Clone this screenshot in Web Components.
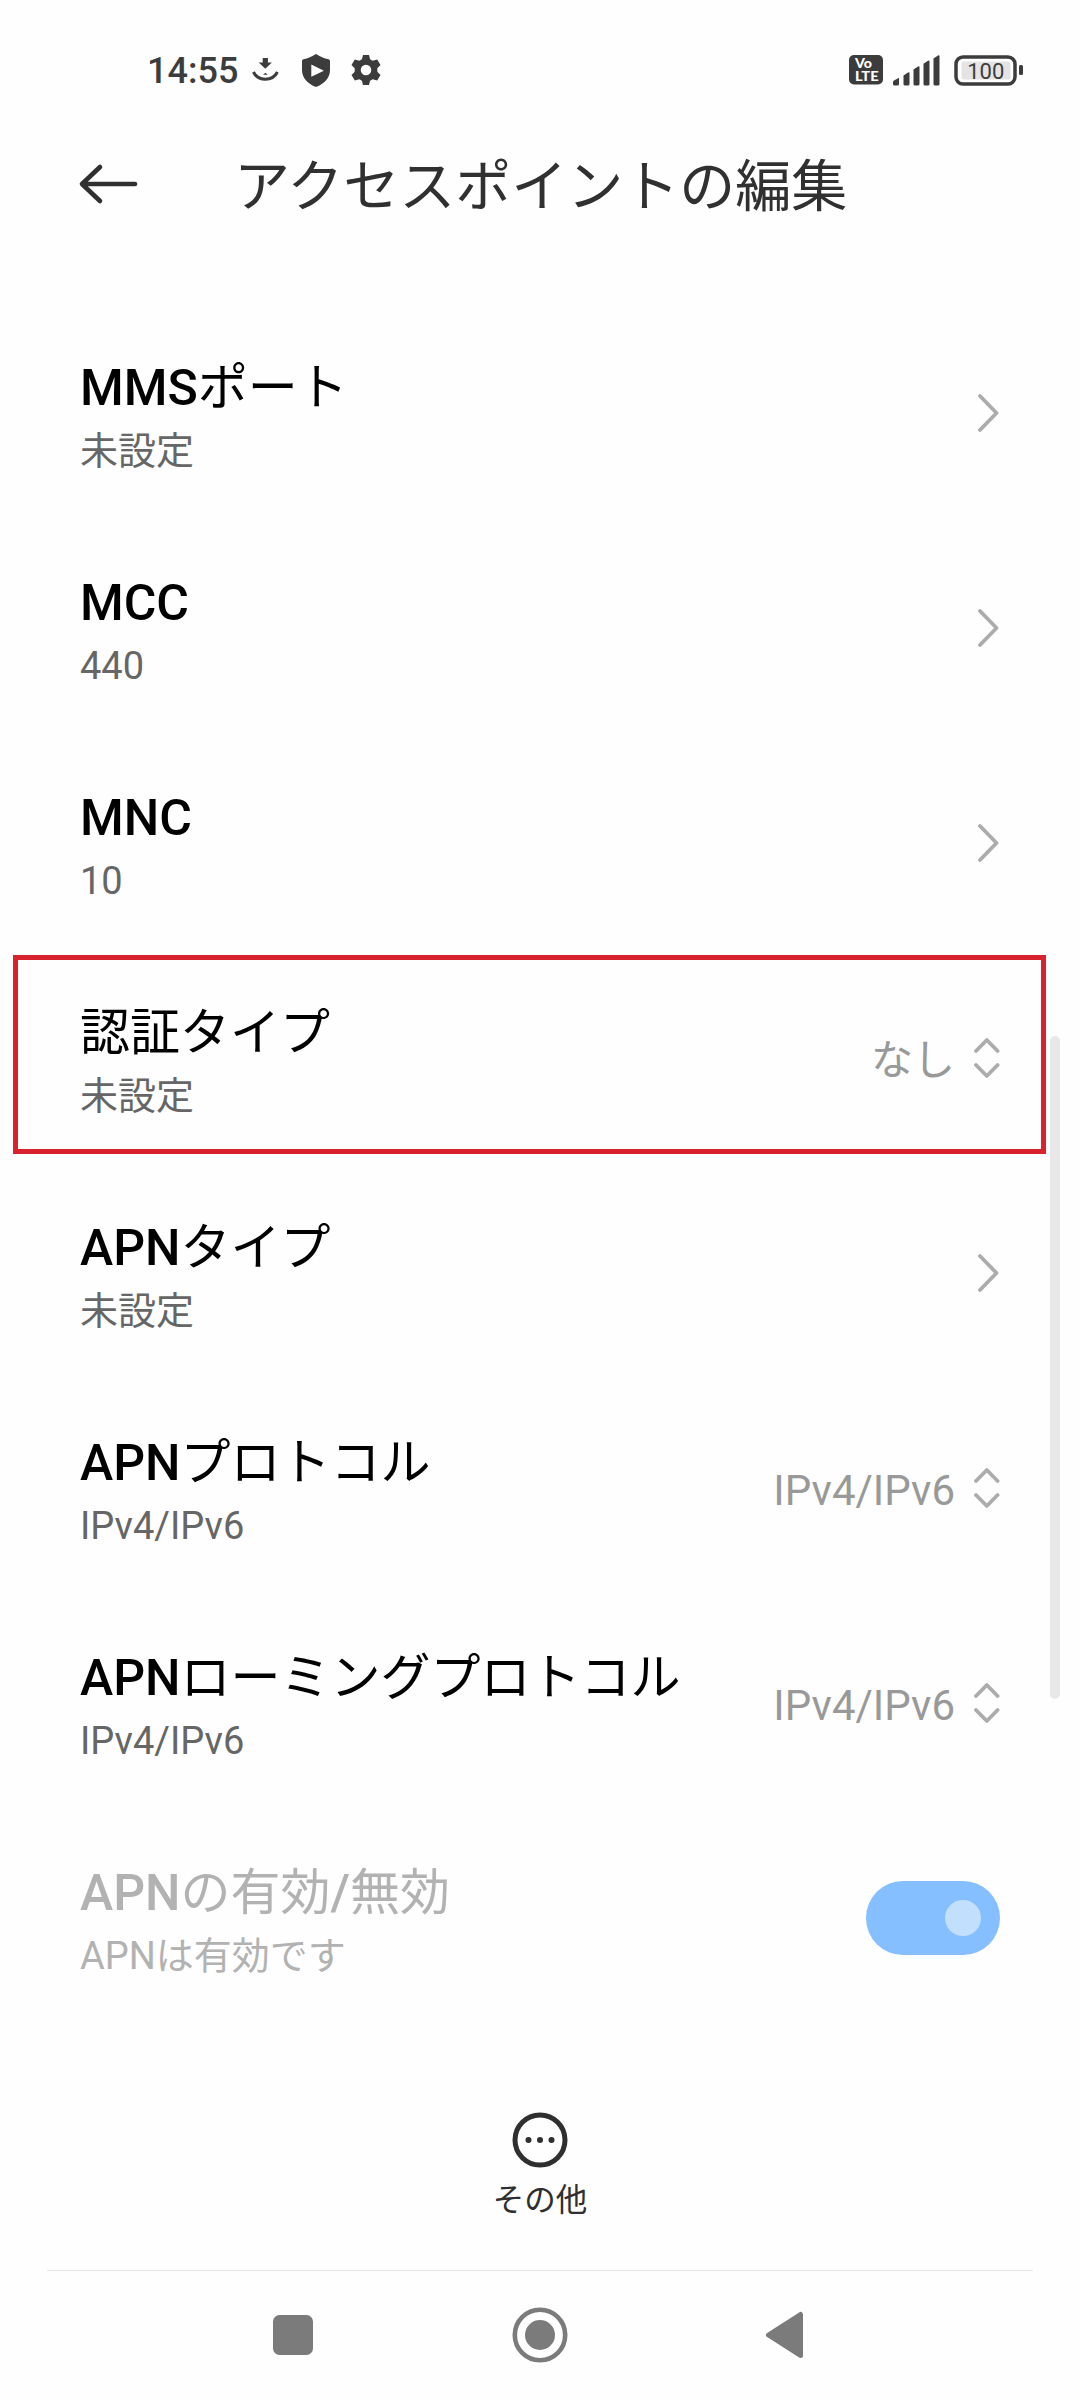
<!DOCTYPE html>
<html lang="ja">
<head>
    <meta charset="UTF-8">
    <meta name="viewport" content="width=device-width, initial-scale=1.0">
    <title>アクセスポイントの編集</title>
    <style>
        body {
            margin: 0;
            background-color: #fefefe;
            font-family: Roboto, 'Noto Sans CJK JP', sans-serif;
        }
    </style>
</head>
<body>
    <phone-screen>
        <status-bar slot="top" time="14:55" battery="100"></status-bar>
        <app-header slot="top">アクセスポイントの編集</app-header>

        <pref-row summary="未設定"><b>MMS</b>ポート</pref-row>
        <pref-row summary="440"><b>MCC</b></pref-row>
        <pref-row summary="10"><b>MNC</b></pref-row>
        <pref-row summary="未設定" type="select" value="なし" marked>認証タイプ</pref-row>
        <pref-row summary="未設定"><b>APN</b>タイプ</pref-row>
        <pref-row summary="IPv4/IPv6" type="select" value="IPv4/IPv6"><b>APN</b>プロトコル</pref-row>
        <pref-row summary="IPv4/IPv6" type="select" value="IPv4/IPv6"><b>APN</b>ローミングプロトコル</pref-row>
        <pref-row summary="APNは有効です" type="switch" disabled><b>APN</b>の有効<b>/</b>無効</pref-row>

        <more-action slot="bottom">その他</more-action>
        <nav-bar slot="bottom"></nav-bar>
    </phone-screen>

    <script>
        class PhoneScreen extends HTMLElement {
            constructor() {
                super();
                this.attachShadow({ mode: 'open' });
            }

            connectedCallback() {
                this.shadowRoot.innerHTML = `
                <style>
                    :host {
                        display: flex;
                        flex-direction: column;
                        width: 1080px;
                        height: 2400px;
                        overflow: hidden;
                    }

                    main {
                        position: relative;
                        flex: 1;
                        padding-top: 66px;
                    }

                    /* scroll indicator, floats over the list */
                    .thumb {
                        position: absolute;
                        top: 796px;
                        right: 20px;
                        width: 10px;
                        height: 663px;
                        border-radius: 5px;
                        background-color: #e8e8e8;
                    }
                </style>
                <slot name="top"></slot>
                <main>
                    <slot></slot>
                    <div class="thumb"></div>
                </main>
                <slot name="bottom"></slot>
                `;
            }
        }

        class StatusBar extends HTMLElement {
            constructor() {
                super();
                this.attachShadow({ mode: 'open' });
            }

            connectedCallback() {
                this.shadowRoot.innerHTML = `
                <style>
                    :host {
                        display: flex;
                        align-items: center;
                        justify-content: space-between;
                        height: 140px;
                        box-sizing: border-box;
                        padding: 0 56px 0 147px;
                        color: #3c3c3c;
                    }

                    .side {
                        display: flex;
                        align-items: center;
                    }

                    .time {
                        width: 105px;
                        font-size: 36px;
                        font-weight: 500;
                        line-height: 42px;
                        padding-top: 2px;
                        box-sizing: border-box;
                    }

                    svg {
                        display: block;
                        fill: currentColor;
                    }

                    .shield { margin-left: 23px; }
                    .gear { margin-left: 21px; }
                    .signal { margin-left: 10px; }
                    .battery { margin-left: 14px; }
                </style>
                <div class="side">
                    <span class="time">${this.getAttribute('time')}</span>
                    <svg width="27" height="32" viewBox="0 0 27 32">
                        <path d="M10.700 4h5.200v4.500h4l-6.600 6.300-6.600-6.300h4z"/>
                        <path d="M1.400 18c2.600 5.200 6.800 7.200 12 7.200s9.400-2 12-7.200" fill="none" stroke="currentColor" stroke-width="3"/>
                        <path d="M11 20.700l2.400-2 2.400 2z"/>
                    </svg>
                    <svg class="shield" width="28" height="33" viewBox="0 0 28 33">
                        <path fill-rule="evenodd" d="M14 0c4 2.800 8 4.300 12.600 5.200q1.400.4 1.400 1.800v9c0 7.800-5.600 13.800-14 17C5.600 29.800 0 23.800 0 16V7q0-1.400 1.400-1.800C6 4.300 10 2.800 14 0zM9.300 10.600v12.200l12.600-6.100z"/>
                    </svg>
                    <svg class="gear" width="30" height="30" viewBox="0 0 30 30">
                        <path fill-rule="evenodd" d="M12 0h6l1.100 4.300 2.600 1.500 4.500-1.300 3.300 5.500-3.200 3.200v3.600l3.200 3.200-3.300 5.500-4.500-1.300-2.600 1.500L18 30h-6l-1.100-4.300-2.600-1.500-4.500 1.300L.5 20l3.200-3.200v-3.600L.5 10l3.300-5.500 4.500 1.300 2.600-1.500zM15 9.700a5.300 5.300 0 1 0 0 10.600a5.300 5.300 0 1 0 0-10.600z"/>
                    </svg>
                </div>
                <div class="side">
                    <svg width="34" height="30" viewBox="0 0 34 30">
                        <rect width="34" height="29.500" rx="5"/>
                        <g fill="#fff" font-family="Lato, sans-serif" font-weight="900">
                            <text x="6" y="13.200" font-size="13" textLength="17" lengthAdjust="spacingAndGlyphs">Vo</text>
                            <text x="6" y="26" font-size="13.500" textLength="23.500" lengthAdjust="spacingAndGlyphs">LTE</text>
                        </g>
                    </svg>
                    <svg class="signal" width="47" height="31" viewBox="0 0 47 31">
                        <path d="M0 27q0-1 1-1.600l5-2.600V29q0 1.500-1.500 1.500H1.500Q0 30.500 0 29z"/>
                        <path d="M10.500 20.500l4.500-3q1.500-.8 1.500 .8V29q0 1.500-1.500 1.500h-3q-1.500 0-1.500-1.500z"/>
                        <path d="M20.500 14.500l4.500-3q1.500-.8 1.500 .8V29q0 1.500-1.500 1.500h-3q-1.500 0-1.500-1.500z"/>
                        <path d="M30.500 8.800l4.500-3q1.500-.8 1.500 .8V29q0 1.500-1.500 1.500h-3q-1.500 0-1.500-1.500z"/>
                        <path d="M40.500 3.500l4.500-3q1.500-.8 1.500 .8V29q0 1.500-1.500 1.500h-3q-1.500 0-1.500-1.500z"/>
                    </svg>
                    <svg class="battery" width="70" height="31" viewBox="0 0 70 31">
                        <rect x="2" y="2" width="59" height="27" rx="7" fill="none" stroke="currentColor" stroke-width="3.500"/>
                        <rect x="7.500" y="6.500" width="49" height="18" rx="2" fill="#e4e4e4"/>
                        <rect x="65" y="10" width="4" height="10" rx="1.500"/>
                        <text x="31.800" y="23.600" text-anchor="middle" font-family="Roboto, sans-serif" font-size="22">${this.getAttribute('battery')}</text>
                    </svg>
                </div>
                `;
            }
        }

        class AppHeader extends HTMLElement {
            constructor() {
                super();
                this.attachShadow({ mode: 'open' });
            }

            connectedCallback() {
                this.shadowRoot.innerHTML = `
                <style>
                    :host {
                        display: flex;
                        align-items: center;
                        height: 100px;
                        padding: 0 78px;
                        color: #303030;
                    }

                    svg {
                        display: block;
                        margin-bottom: 12px;
                    }

                    h1 {
                        margin: 0 0 6px 94px;
                        font-size: 56px;
                        font-weight: 400;
                        line-height: 70px;
                        white-space: nowrap;
                    }
                </style>
                <svg width="62" height="44" viewBox="0 0 62 44" fill="none" stroke="currentColor" stroke-width="4.600" stroke-linecap="round" stroke-linejoin="round">
                    <path d="M57 22H4M22 5L4 22l18 17"/>
                </svg>
                <h1><slot></slot></h1>
                `;
            }
        }

        class ToggleSwitch extends HTMLElement {
            constructor() {
                super();
                this.attachShadow({ mode: 'open' });
            }

            connectedCallback() {
                this.shadowRoot.innerHTML = `
                <style>
                    :host {
                        display: flex;
                        align-items: center;
                        justify-content: flex-end;
                        width: 134px;
                        height: 74px;
                        box-sizing: border-box;
                        padding-right: 19px;
                        border-radius: 37px;
                        background-color: #86bfff;
                    }

                    .knob {
                        width: 36px;
                        height: 36px;
                        border-radius: 50%;
                        background-color: #c3dffe;
                    }
                </style>
                <div class="knob"></div>
                `;
            }
        }

        class PrefRow extends HTMLElement {
            constructor() {
                super();
                this.attachShadow({ mode: 'open' });
            }

            // Right hand side of the row, depends on the type
            control() {
                const type = this.getAttribute('type');
                if (type === 'switch') {
                    return '<toggle-switch></toggle-switch>';
                }
                if (type === 'select') {
                    return `
                    <span class="value">${this.getAttribute('value')}</span>
                    <svg width="26" height="42" viewBox="0 0 26 42">
                        <path d="M2 14L12.800 3l10.800 11M2 28l10.800 11 10.800-11"/>
                    </svg>`;
                }
                return `
                <svg width="22" height="38" viewBox="0 0 22 38">
                    <path d="M2 2l16.500 17L2 36"/>
                </svg>`;
            }

            connectedCallback() {
                this.shadowRoot.innerHTML = `
                <style>
                    :host {
                        position: relative;
                        display: flex;
                        align-items: center;
                        justify-content: space-between;
                        height: 215px;
                        box-sizing: border-box;
                        padding: 0 80px;
                    }

                    /* red frame drawn over the row */
                    :host([marked])::after {
                        content: '';
                        position: absolute;
                        top: 4px;
                        left: 13px;
                        right: 34px;
                        height: 199px;
                        box-sizing: border-box;
                        border: 5px solid #d8232f;
                    }

                    .text {
                        padding-top: 6px;
                    }

                    .title {
                        font-size: 50px;
                        line-height: 58px;
                        color: #000;
                    }

                    /* only the latin part is heavier */
                    ::slotted(b) {
                        font-weight: 500;
                    }

                    .summary {
                        margin-top: 11px;
                        font-size: 38px;
                        line-height: 46px;
                        color: #666;
                    }

                    :host([disabled]) .title,
                    :host([disabled]) .summary {
                        color: #b2b2b2;
                    }

                    .control {
                        display: flex;
                        align-items: center;
                        padding-bottom: 2px;
                    }

                    .value {
                        padding-top: 6px;
                        margin-right: 19px;
                        font-size: 42px;
                        line-height: 50px;
                        color: #999;
                    }

                    svg {
                        display: block;
                        fill: none;
                        stroke: #acacac;
                        stroke-width: 3.8;
                        stroke-linecap: round;
                        stroke-linejoin: round;
                    }
                </style>
                <div class="text">
                    <div class="title"><slot></slot></div>
                    <div class="summary">${this.getAttribute('summary')}</div>
                </div>
                <div class="control">${this.control()}</div>
                `;
            }
        }

        class MoreAction extends HTMLElement {
            constructor() {
                super();
                this.attachShadow({ mode: 'open' });
            }

            connectedCallback() {
                this.shadowRoot.innerHTML = `
                <style>
                    :host {
                        display: flex;
                        flex-direction: column;
                        align-items: center;
                        height: 158px;
                        color: #2f2f2f;
                        font-size: 31.5px;
                        line-height: 40px;
                    }

                    svg {
                        display: block;
                        margin-bottom: 13px;
                    }
                </style>
                <svg width="56" height="56" viewBox="0 0 56 56" fill="currentColor">
                    <circle cx="28" cy="28" r="25" fill="none" stroke="currentColor" stroke-width="5"/>
                    <circle cx="16.500" cy="28" r="3"/>
                    <circle cx="28" cy="28" r="3"/>
                    <circle cx="39.500" cy="28" r="3"/>
                </svg>
                <slot></slot>
                `;
            }
        }

        class NavBar extends HTMLElement {
            constructor() {
                super();
                this.attachShadow({ mode: 'open' });
            }

            connectedCallback() {
                this.shadowRoot.innerHTML = `
                <style>
                    :host {
                        display: grid;
                        grid-template-columns: repeat(3, 247px);
                        justify-content: center;
                        justify-items: center;
                        align-items: center;
                        height: 130px;
                        box-sizing: border-box;
                        margin: 0 47px;
                        padding-bottom: 1px;
                        border-top: 1px solid #e6e6e6;
                    }

                    svg {
                        display: block;
                        fill: #7b7b7b;
                        stroke: #7b7b7b;
                    }
                </style>
                <svg width="56" height="56" viewBox="0 0 56 56">
                    <rect x="8" y="8" width="40" height="40" rx="6.500" stroke="none"/>
                </svg>
                <svg width="56" height="56" viewBox="0 0 56 56">
                    <circle cx="28" cy="28" r="25.200" fill="none" stroke-width="4.600"/>
                    <circle cx="28" cy="28" r="15" stroke="none"/>
                </svg>
                <svg width="56" height="56" viewBox="0 0 56 56">
                    <path d="M9.500 28L41.500 7.500v41z" stroke-width="5" stroke-linejoin="round"/>
                </svg>
                `;
            }
        }

        customElements.define('phone-screen', PhoneScreen);
        customElements.define('status-bar', StatusBar);
        customElements.define('app-header', AppHeader);
        customElements.define('toggle-switch', ToggleSwitch);
        customElements.define('pref-row', PrefRow);
        customElements.define('more-action', MoreAction);
        customElements.define('nav-bar', NavBar);
    </script>
</body>
</html>
